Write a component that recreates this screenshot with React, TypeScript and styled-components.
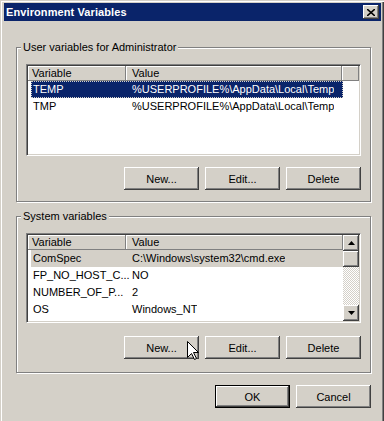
import styled, { createGlobalStyle } from "styled-components";

const GlobalStyle = createGlobalStyle`
  html, body {
    margin: 0;
    padding: 0;
    background: #d4d0c8;
  }
  body {
    font-family: "Liberation Sans", Arial, sans-serif;
    font-size: 11px;
    color: #000;
  }
`;

const raised = `
  box-shadow: inset -1px -1px 0 #404040, inset 1px 1px 0 #fff,
    inset -2px -2px 0 #808080, inset 2px 2px 0 #d4d0c8;
`;

const Window = styled.div`
  position: relative;
  width: 384px;
  height: 421px;
  box-sizing: border-box;
  padding: 3px 3px 0 4px;
  background: #d4d0c8;
  box-shadow: inset 1px 1px 0 #d4d0c8, inset 2px 2px 0 #fff,
    inset -1px 0 0 #404040, inset -2px 0 0 #808080;
  overflow: hidden;
`;

const TitleBar = styled.div`
  height: 18px;
  background: #0a246a;
  display: flex;
  align-items: center;
  justify-content: space-between;
  padding: 0 2px;
`;

const Title = styled.span`
  color: #fff;
  font-weight: bold;
  font-size: 11px;
  letter-spacing: 0.1px;
`;

const CloseButton = styled.div`
  width: 16px;
  height: 14px;
  background: #d4d0c8;
  display: flex;
  align-items: center;
  justify-content: center;
  ${raised}
`;

const Content = styled.div`
  display: flex;
  flex-direction: column;
  padding: 0 10px 0 12px;
`;

const Group = styled.fieldset<{ $top: number; $bottom: number }>`
  margin: ${(p) => p.$top}px 0 0;
  padding: 10px 9px ${(p) => p.$bottom}px;
  border: 1px solid #808080;
  box-shadow: 1px 1px 0 #fff, inset 1px 1px 0 #fff;
  min-width: 0;
  display: flex;
  flex-direction: column;
`;

const Legend = styled.legend`
  padding: 0 2px;
  margin-left: -5px;
  background: #d4d0c8;
  line-height: 13px;
  height: 13px;
`;

const ListBox = styled.div<{ $h: number }>`
  height: ${(p) => p.$h}px;
  box-sizing: border-box;
  border: 1px solid;
  border-color: #808080 #fff #fff #808080;
  box-shadow: inset 1px 1px 0 #404040, inset -1px -1px 0 #d4d0c8;
  padding: 1px;
  background: #fff;
  display: flex;
  overflow: hidden;
`;

const ListMain = styled.div`
  flex: 1;
  min-width: 0;
  display: flex;
  flex-direction: column;
  overflow: hidden;
`;

const Header = styled.div`
  display: flex;
  height: 15px;
  flex-shrink: 0;
`;

const HeaderCell = styled.div<{ $w?: number }>`
  ${(p) => (p.$w ? `width: ${p.$w}px; flex-shrink: 0;` : "flex: 1;")}
  box-sizing: border-box;
  background: #d4d0c8;
  padding-left: ${(p) => (p.$w === 98 ? 4 : 6)}px;
  line-height: 15px;
  box-shadow: inset -1px -1px 0 #808080, inset 1px 1px 0 #fff;
  white-space: nowrap;
  overflow: hidden;
`;

const Row = styled.div<{ $state?: "focus" | "inactive" }>`
  display: flex;
  flex-shrink: 0;
  height: 17px;
  line-height: 17px;
  width: 312px;
  margin-left: 3px;
  box-sizing: border-box;
  white-space: nowrap;
  background: ${(p) =>
    p.$state === "focus" ? "#0a246a" : p.$state === "inactive" ? "#d4d0c8" : "transparent"};
  color: ${(p) => (p.$state === "focus" ? "#fff" : "#000")};
  outline: ${(p) => (p.$state === "focus" ? "1px dotted #d4d0c8" : "none")};
  outline-offset: -1px;
`;

const VarCell = styled.div`
  width: 99px;
  flex-shrink: 0;
  box-sizing: border-box;
  padding-left: 2px;
  overflow: hidden;
`;

const ValueCell = styled.div`
  padding-left: 2px;
  overflow: hidden;
`;

const ScrollBar = styled.div`
  width: 16px;
  flex-shrink: 0;
  display: flex;
  flex-direction: column;
`;

const ScrollButton = styled.div`
  width: 16px;
  height: 16px;
  flex-shrink: 0;
  background: #d4d0c8;
  display: flex;
  align-items: center;
  justify-content: center;
  ${raised}
`;

const Track = styled.div`
  flex: 1;
  background-color: #d4d0c8;
  background-image: conic-gradient(#fff 25%, #d4d0c8 0 50%, #fff 0 75%, #d4d0c8 0);
  background-size: 2px 2px;
`;

const ButtonRow = styled.div<{ $top: number }>`
  display: flex;
  justify-content: flex-end;
  gap: 6px;
  margin-top: ${(p) => p.$top}px;
`;

const Button = styled.div<{ $default?: boolean }>`
  width: 75px;
  height: 23px;
  box-sizing: border-box;
  display: flex;
  align-items: center;
  justify-content: center;
  background: #d4d0c8;
  ${(p) =>
    p.$default
      ? `border: 1px solid #000;
         box-shadow: inset -1px -1px 0 #404040, inset 1px 1px 0 #fff, inset -2px -2px 0 #808080;`
      : raised}
`;

const Cursor = styled.svg`
  position: absolute;
  left: 187px;
  top: 341px;
`;

type Variable = { name: string; value: string; state?: "focus" | "inactive" };

const userVars: Variable[] = [
  { name: "TEMP", value: "%USERPROFILE%\\AppData\\Local\\Temp", state: "focus" },
  { name: "TMP", value: "%USERPROFILE%\\AppData\\Local\\Temp" },
];

const systemVars: Variable[] = [
  { name: "ComSpec", value: "C:\\Windows\\system32\\cmd.exe", state: "inactive" },
  { name: "FP_NO_HOST_C...", value: "NO" },
  { name: "NUMBER_OF_P...", value: "2" },
  { name: "OS", value: "Windows_NT" },
  { name: "Path", value: "C:\\Windows\\system32;C:\\Windows;C:\\Windows\\Sys..." },
];

const Arrow = ({ up }: { up?: boolean }) => (
  <svg width="7" height="4" viewBox="0 0 7 4">
    <path d={up ? "M3.5 0 L7 4 L0 4 Z" : "M0 0 L7 0 L3.5 4 Z"} fill="#000" />
  </svg>
);

const VarList = ({ rows, height, scroll }: { rows: Variable[]; height: number; scroll?: boolean }) => (
  <ListBox $h={height}>
    <ListMain>
      <Header>
        <HeaderCell $w={98}>Variable</HeaderCell>
        <HeaderCell $w={scroll ? undefined : 216}>Value</HeaderCell>
        {!scroll && <HeaderCell />}
      </Header>
      {rows.map((r) => (
        <Row key={r.name} $state={r.state}>
          <VarCell>{r.name}</VarCell>
          <ValueCell>{r.value}</ValueCell>
        </Row>
      ))}
    </ListMain>
    {scroll && (
      <ScrollBar>
        <ScrollButton>
          <Arrow up />
        </ScrollButton>
        <ScrollButton />
        <Track />
        <ScrollButton>
          <Arrow />
        </ScrollButton>
      </ScrollBar>
    )}
  </ListBox>
);

const Actions = ({ top }: { top: number }) => (
  <ButtonRow $top={top}>
    <Button>New...</Button>
    <Button>Edit...</Button>
    <Button>Delete</Button>
  </ButtonRow>
);

export default function App() {
  return (
    <>
      <GlobalStyle />
      <Window>
        <TitleBar>
          <Title>Environment Variables</Title>
          <CloseButton>
            <svg width="8" height="7" viewBox="0 0 8 7">
              <path d="M0 0 L8 7 M8 0 L0 7" stroke="#000" strokeWidth="1.6" />
            </svg>
          </CloseButton>
        </TitleBar>
        <Content>
          <Group $top={20} $bottom={11}>
            <Legend>User variables for Administrator</Legend>
            <VarList rows={userVars} height={92} />
            <Actions top={11} />
          </Group>
          <Group $top={8} $bottom={13}>
            <Legend>System variables</Legend>
            <VarList rows={systemVars} height={90} scroll />
            <Actions top={13} />
          </Group>
          <ButtonRow $top={12}>
            <Button $default>OK</Button>
            <Button>Cancel</Button>
          </ButtonRow>
        </Content>
        <Cursor width="13" height="20" viewBox="0 0 13 20">
          <path
            d="M0.5 0.5 L0.5 16.5 L4.5 12.5 L7.5 18.5 L9.5 17.5 L6.5 11.5 L11.5 11.5 Z"
            fill="#fff"
            stroke="#000"
            strokeWidth="1"
          />
        </Cursor>
      </Window>
    </>
  );
}
